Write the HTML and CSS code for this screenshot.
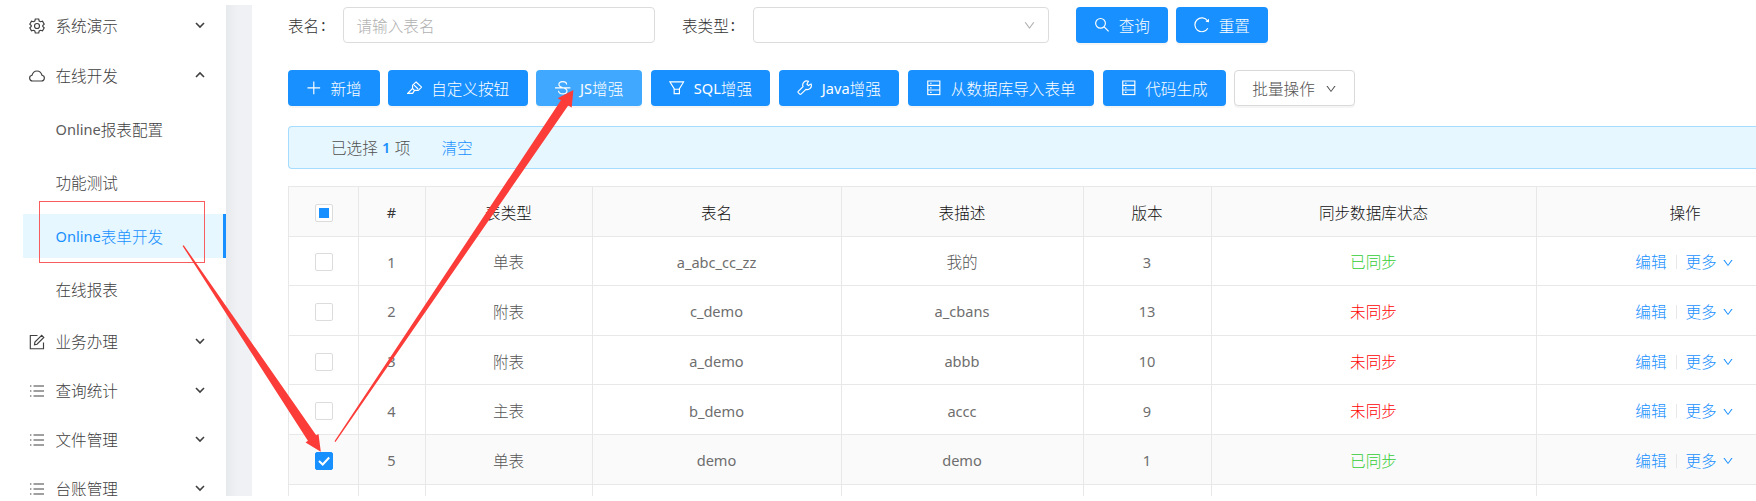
FILE: index.html
```html
<!DOCTYPE html>
<html lang="zh-CN">
<head>
<meta charset="utf-8">
<title>Online表单开发</title>
<link rel="stylesheet" href="styles.css">
</head>
<body>
<svg class="defs" width="0" height="0">
  <defs>
    <symbol id="gear" viewBox="0 0 16 16"><path d="M6.3 1h3.4l.5 2 1.3.75 2-.6 1.7 2.95-1.45 1.4v1l1.45 1.4-1.7 2.95-2-.6-1.3.75-.5 2H6.3l-.5-2-1.3-.75-2 .6L.8 9.9l1.45-1.4v-1L.8 6.1l1.7-2.95 2 .6L5.8 3z"/><circle cx="8" cy="8" r="2.5"/></symbol>
    <symbol id="cloud" viewBox="0 0 16 16"><path d="M3.6 13h8.8a2.9 2.9 0 0 0 .6-5.75C12.3 4.700 10.400 3 8 3S3.700 4.700 3 7.250A2.900 2.900 0 0 0 3.600 13z"/></symbol>
    <symbol id="form" viewBox="0 0 16 16"><path d="M8.500 1.500H1.300v13.200h13.200V8.500M5.500 10.700l.4-2.600 6.800-6.800 2.100 2.100-6.800 6.800z"/></symbol>
    <symbol id="list" viewBox="0 0 16 16"><path d="M4.500 3h10.500M4.500 8h10.500M4.500 13h10.500M1 3h1.400M1 8h1.400M1 13h1.400"/></symbol>
    <symbol id="chev" viewBox="0 0 10 8"><path d="M1 2l4 4 4-4"/></symbol>
    <symbol id="down" viewBox="0 0 1024 1024"><path d="M884 256h-75c-5.100 0-9.900 2.500-12.900 6.600L512 654.200 227.900 262.600c-3-4.100-7.800-6.600-12.900-6.600h-75c-6.500 0-10.300 7.400-6.500 12.700l352.600 486.100c12.800 17.600 39 17.600 51.700 0l352.600-486.100c3.900-5.300.1-12.700-6.400-12.700z"/></symbol>
    <symbol id="search" viewBox="0 0 16 16"><circle cx="6.700" cy="6.500" r="5"/><path d="M10.400 10.200l4.600 4.600"/></symbol>
    <symbol id="reload" viewBox="0 0 16 16"><path d="M14.200 11.500A7.100 7.100 0 1 1 13.900 4"/><path class="solid" d="M15.400 1.700v3.700l-3.600-.6z"/></symbol>
    <symbol id="plus" viewBox="0 0 16 16"><path d="M8 1.500v13M1.500 8h13"/></symbol>
    <symbol id="mark" viewBox="0 0 16 16"><path d="M9.300 2l5.700 5.300-3.400 3.300H7.600L5.700 8.700V5.500zM5.700 8.600L.8 13.700h5l1.900-3.100M7.300 5.200l4.100 4"/></symbol>
    <symbol id="strike" viewBox="0 0 16 16"><path d="M0 8h16M12 4.600C11.700 2.600 10.200 1.700 8 1.700c-2.400 0-4 1.200-4 3C4 6.500 5.500 7.300 8 8c2.700.7 4.300 1.500 4.300 3.300 0 1.900-1.800 3-4.300 3-2.600 0-4.200-1.100-4.400-3.200"/></symbol>
    <symbol id="filter" viewBox="0 0 16 16"><path d="M1 2h14l-4.300 7v5H5.300V9zM5.300 9.500h5.400"/></symbol>
    <symbol id="tool" viewBox="0 0 16 16"><path d="M14.500 4.200l-2.900 1.500-1.400-1.500 1.500-2.900a4.200 4.200 0 0 0-5.500 5.500L1.300 11.700a.9.900 0 0 0 0 1.300l1.500 1.500a.9.900 0 0 0 1.300 0L9.200 9.600a4.200 4.200 0 0 0 5.300-5.400z"/></symbol>
    <symbol id="db" viewBox="0 0 16 16"><path d="M1.800 1h12.400v14H1.800zM1.800 5.600h12.400M1.800 10.300h12.400M4.200 3.300h1.500M4.200 8h1.500M4.200 12.700h1.500"/></symbol>
  </defs>
</svg>
<div class="app">
  <nav class="menu">
    <div class="item"><svg class="ico"><use href="#gear"/></svg>系统演示<svg class="chev"><use href="#chev"/></svg></div>
    <div class="item open"><svg class="ico"><use href="#cloud"/></svg>在线开发<svg class="chev up"><use href="#chev"/></svg></div>
    <div class="sub"><span class="en">Online</span>报表配置</div>
    <div class="sub">功能测试</div>
    <div class="sub active"><span class="en">Online</span>表单开发</div>
    <div class="sub">在线报表</div>
    <div class="item after"><svg class="ico"><use href="#form"/></svg>业务办理<svg class="chev"><use href="#chev"/></svg></div>
    <div class="item"><svg class="ico thin"><use href="#list"/></svg>查询统计<svg class="chev"><use href="#chev"/></svg></div>
    <div class="item"><svg class="ico thin"><use href="#list"/></svg>文件管理<svg class="chev"><use href="#chev"/></svg></div>
    <div class="item"><svg class="ico thin"><use href="#list"/></svg>台账管理<svg class="chev"><use href="#chev"/></svg></div>
  </nav>
  <div class="gutter"></div>
  <main class="main">
    <form class="search">
      <label class="label name">表名<i class="colon">:</i></label>
      <div class="field">请输入表名</div>
      <label class="label type">表类型<i class="colon">:</i></label>
      <div class="field select"><svg class="down"><use href="#down"/></svg></div>
      <div class="btn query"><svg class="bi"><use href="#search"/></svg>查询</div>
      <div class="btn reset"><svg class="bi"><use href="#reload"/></svg>重置</div>
    </form>
    <div class="tools">
      <div class="btn w92"><svg class="bi"><use href="#plus"/></svg>新增</div>
      <div class="btn w140"><svg class="bi"><use href="#mark"/></svg>自定义按钮</div>
      <div class="btn w106 hover"><svg class="bi"><use href="#strike"/></svg><span class="en">JS</span>增强</div>
      <div class="btn w119"><svg class="bi"><use href="#filter"/></svg><span class="en">SQL</span>增强</div>
      <div class="btn w120"><svg class="bi"><use href="#tool"/></svg><span class="en">Java</span>增强</div>
      <div class="btn w186"><svg class="bi"><use href="#db"/></svg>从数据库导入表单</div>
      <div class="btn w123"><svg class="bi"><use href="#db"/></svg>代码生成</div>
      <div class="btn plain">批量操作<svg class="down"><use href="#down"/></svg></div>
    </div>
    <div class="alert">已选择<b class="count">1</b>项<a class="clear">清空</a></div>
    <table class="grid">
      <colgroup><col class="c1"><col class="c2"><col class="c3"><col class="c4"><col class="c5"><col class="c6"><col class="c7"><col class="c8"></colgroup>
      <thead>
        <tr><th><span class="box half"></span></th><th><span class="en">#</span></th><th>表类型</th><th>表名</th><th>表描述</th><th>版本</th><th>同步数据库状态</th><th>操作</th></tr>
      </thead>
      <tbody>
        <tr><td><span class="box"></span></td><td><span class="en">1</span></td><td>单表</td><td><span class="en">a_abc_cc_zz</span></td><td>我的</td><td><span class="en">3</span></td><td class="ok">已同步</td><td><div class="ops"><a>编辑</a><i class="sep"></i><a>更多</a><svg class="down"><use href="#down"/></svg></div></td></tr>
        <tr><td><span class="box"></span></td><td><span class="en">2</span></td><td>附表</td><td><span class="en">c_demo</span></td><td><span class="en">a_cbans</span></td><td><span class="en">13</span></td><td class="no">未同步</td><td><div class="ops"><a>编辑</a><i class="sep"></i><a>更多</a><svg class="down"><use href="#down"/></svg></div></td></tr>
        <tr><td><span class="box"></span></td><td><span class="en">3</span></td><td>附表</td><td><span class="en">a_demo</span></td><td><span class="en">abbb</span></td><td><span class="en">10</span></td><td class="no">未同步</td><td><div class="ops"><a>编辑</a><i class="sep"></i><a>更多</a><svg class="down"><use href="#down"/></svg></div></td></tr>
        <tr><td><span class="box"></span></td><td><span class="en">4</span></td><td>主表</td><td><span class="en">b_demo</span></td><td><span class="en">accc</span></td><td><span class="en">9</span></td><td class="no">未同步</td><td><div class="ops"><a>编辑</a><i class="sep"></i><a>更多</a><svg class="down"><use href="#down"/></svg></div></td></tr>
        <tr class="picked"><td><span class="box on"><svg class="tick" viewBox="0 0 18 18"><path d="M4 9l3.700 3.500 6.500-7"/></svg></span></td><td><span class="en">5</span></td><td>单表</td><td><span class="en">demo</span></td><td><span class="en">demo</span></td><td><span class="en">1</span></td><td class="ok">已同步</td><td><div class="ops"><a>编辑</a><i class="sep"></i><a>更多</a><svg class="down"><use href="#down"/></svg></div></td></tr>
        <tr><td></td><td></td><td></td><td></td><td></td><td></td><td></td><td></td></tr>
      </tbody>
    </table>
  </main>
</div>
<svg class="marks" width="1756" height="501" viewBox="0 0 1756 501">
  <rect class="frame" x="39.500" y="201.500" width="165" height="61"/>
  <path class="arrow" d="M182.600 245.900l1.100-.7L316.200 435.200l2.300-1.300 2.300 17.800-15.200-9.300 2.300-1.600z"/>
  <path class="arrow" d="M334.500 441.200l1 .7L568.200 105.600l3.500 2 1.700-17.600-15.700 8.300 3.200 1.900z"/>
</svg>
</body>
</html>
```

FILE: styles.css
```css
* { box-sizing: border-box; }
body {
  margin: 0;
  width: 1756px;
  height: 501px;
  overflow: hidden;
  background: #fff;
  color: #505050;
  font: 15.6px/24px "Noto Sans CJK SC", sans-serif;
  font-weight: 300;
}
svg { fill: none; stroke: currentColor; flex: none; }
i { font-style: normal; }
.solid { fill: currentColor; stroke: none; }
.defs { position: absolute; }
.en { font-family: "Noto Sans", sans-serif; font-size: 14.6px; font-weight: 400; opacity: .85; }

/* side menu */
.app { display: flex; height: 496px; overflow: hidden; }
.menu { flex: none; width: 226px; color: #404040; }
.item { display: flex; align-items: center; height: 49px; padding: 0 21px 0 29px; }
.item.open { height: 52px; }
.item.after { margin-top: 5px; }
.ico { width: 16px; height: 16px; margin: 2px 10.500px 0 0; stroke-width: 1.15; }
.ico.thin { stroke-width: 1; }
.chev { width: 10px; height: 8px; margin-left: auto; stroke-width: 1.6; }
.after .chev, .after ~ .item .chev { margin-bottom: 1px; }
.chev.up { transform: scaleY(-1); }
.sub { display: flex; align-items: center; height: 44.600px; margin: 5.400px 0 4.500px 23px; padding-left: 32.500px; }
.sub + .sub { margin-top: 9px; }
.active { background: #e6f7ff; color: #1890ff; border-right: 3.300px solid #1890ff; }
.active .en { opacity: 1; }
.gutter { flex: none; width: 26px; margin-top: 5px; background: linear-gradient(90deg, #e7eaed, #f0f1f5 12px); }

/* search form */
.main { flex: none; width: 1504px; padding: 7px 0 0 36px; overflow: hidden; }
.search { display: flex; align-items: center; height: 36px; color: #333; }
.label { display: flex; }
.label.name { width: 55px; }
.label.type { width: 71px; margin-left: 27px; }
.colon { margin-left: 2px; font-family: "Noto Sans", sans-serif; font-weight: 400; }
.field { display: flex; align-items: center; width: 312px; height: 36px; padding: 0 12.500px; border: 1px solid #dcdcdc; border-radius: 4px; color: #b0b0b0; }
.select { width: 296px; justify-content: flex-end; }
.down { width: 12px; height: 12px; fill: currentColor; stroke: none; }
.select .down { width: 13px; height: 13px; }
.btn { display: flex; flex: none; align-items: center; justify-content: center; height: 36px; border-radius: 4px; background: #1890ff; color: #fff; box-shadow: 0 2px 0 rgba(0,0,0,.04); }
.btn .en { opacity: 1; }
.bi { width: 15.600px; height: 15.600px; margin-right: 9px; stroke-width: 1.200; }
.query { width: 92px; margin-left: 27px; }
.reset { width: 92px; margin-left: 8px; }

/* toolbar */
.tools { display: flex; gap: 8.700px; margin-top: 27px; }
.w92 { width: 91.500px; }
.w140 { width: 139.500px; }
.w106 { width: 106px; }
.w119 { width: 119px; }
.w120 { width: 120.500px; }
.w186 { width: 186px; }
.w123 { width: 123px; }
.hover { background: #40a9ff; }
.plain { width: 120.500px; border: 1px solid #d9d9d9; background: #fff; color: #505050; }
.plain .down { width: 12px; height: 12px; margin: 2px 0 0 10px; }

.alert { display: flex; align-items: center; height: 43px; margin-top: 20px; padding-left: 42px; padding-bottom: 1px; border: 1px solid #a6dcff; border-right: 0; border-radius: 4px 0 0 4px; background: #e6f7ff; }
.count { width: 17px; text-align: center; color: #1890ff; font: 600 14.600px/24px "Noto Sans", sans-serif; }
.clear { margin-left: 31px; color: #1890ff; }

/* data table */
.grid { width: 1547px; margin-top: 17px; border-collapse: separate; border-spacing: 0; table-layout: fixed; border-top: 1px solid #e8e8e8; border-left: 1px solid #e8e8e8; }
.c1 { width: 70px; } .c2 { width: 67px; } .c3 { width: 167px; } .c4 { width: 249px; }
.c5 { width: 242px; } .c6 { width: 128px; } .c7 { width: 325px; } .c8 { width: 298px; }
th, td { height: 49.600px; padding: 1px 1px 0 0; text-align: center; vertical-align: middle; border-right: 1px solid #e8e8e8; border-bottom: 1px solid #e8e8e8; color: #555; font-weight: inherit; }
th { background: #fafafa; color: #111; }
.picked td { background: #fafafa; }
th:first-child, td:first-child { padding-right: 0; }
td.ok { color: #32cd32; }
td.no { color: #f00; }
.box { display: flex; align-items: center; justify-content: center; width: 18px; height: 18px; margin: 2px auto 0; border: 1px solid #dcdcdc; border-radius: 2px; background: #fff; }
.half::after { content: ""; width: 10px; height: 10px; background: #1890ff; }
.on { border-color: #1890ff; background: #1890ff; color: #fff; }
.tick { width: 18px; height: 18px; stroke-width: 2; }
.ops { display: flex; align-items: center; justify-content: center; color: #1890ff; }
.ops .down { width: 12px; height: 12px; margin: 3px 0 0 5px; }
.sep { width: 1px; height: 14px; margin: 2px 9px 0; background: #e8e8e8; }
.ops a:first-child { margin-left: -1px; }

/* annotations drawn over the page */
.marks { position: absolute; left: 0; top: 0; }
.frame { stroke: #f95c5c; }
.arrow { fill: #fb3c38; stroke: none; }
```
